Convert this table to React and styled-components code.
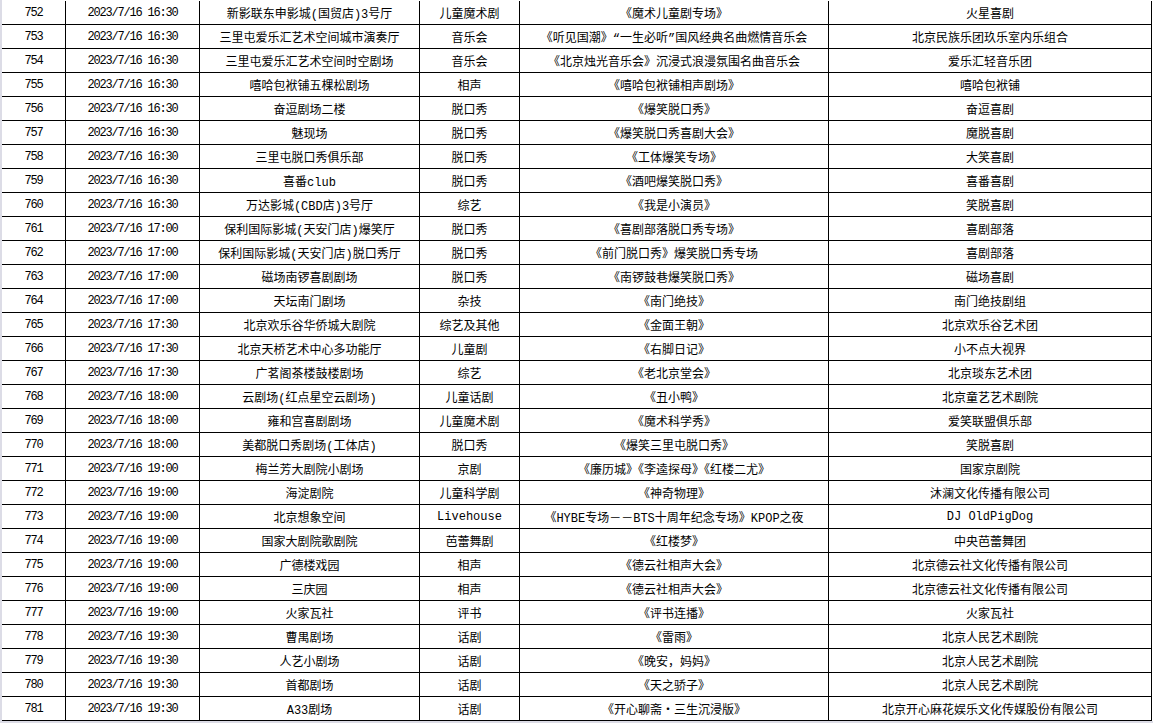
import React from 'react';
import styled, { createGlobalStyle } from 'styled-components';

const GlobalStyle = createGlobalStyle`
    html, body {
        margin: 0;
        padding: 0;
        background: #ffffff;
        overflow: hidden;
    }
`;

const Page = styled.div`
    display: flex;
    flex-direction: column;
    width: 1153px;
`;

const Sheet = styled.div`
    display: grid;
    grid-template-columns: 64px 134px 220px 100px 309px 323px;
    grid-auto-rows: 24px;
    border-left: 2px solid #dcdce6;
    padding-top: 1px;
`;

const Cell = styled.div`
    box-sizing: border-box;
    display: flex;
    align-items: center;
    justify-content: center;
    border-right: 1px solid #000;
    border-bottom: 1px solid #000;
    padding-top: 1px;
    font-family: ${({ $mono }) => ($mono ? '"Liberation Mono", monospace' : '"Liberation Mono", "Noto Sans CJK SC", sans-serif')};
    font-size: 12px;
    letter-spacing: ${({ $mono }) => ($mono ? '-1.2px' : '0')};
    color: #000;
    white-space: nowrap;
    overflow: hidden;
`;

const BottomStrip = styled.div`
    height: 3px;
    background: #dcdce6;
`;

const rows = [
    [752, '16:30', '新影联东申影城(国贸店)3号厅', '儿童魔术剧', '《魔术儿童剧专场》', '火星喜剧'],
    [753, '16:30', '三里屯爱乐汇艺术空间城市演奏厅', '音乐会', '《听见国潮》“一生必听”国风经典名曲燃情音乐会', '北京民族乐团玖乐室内乐组合'],
    [754, '16:30', '三里屯爱乐汇艺术空间时空剧场', '音乐会', '《北京烛光音乐会》沉浸式浪漫氛围名曲音乐会', '爱乐汇轻音乐团'],
    [755, '16:30', '嘻哈包袱铺五棵松剧场', '相声', '《嘻哈包袱铺相声剧场》', '嘻哈包袱铺'],
    [756, '16:30', '奋逗剧场二楼', '脱口秀', '《爆笑脱口秀》', '奋逗喜剧'],
    [757, '16:30', '魅现场', '脱口秀', '《爆笑脱口秀喜剧大会》', '魔脱喜剧'],
    [758, '16:30', '三里屯脱口秀俱乐部', '脱口秀', '《工体爆笑专场》', '大笑喜剧'],
    [759, '16:30', '喜番club', '脱口秀', '《酒吧爆笑脱口秀》', '喜番喜剧'],
    [760, '16:30', '万达影城(CBD店)3号厅', '综艺', '《我是小演员》', '笑脱喜剧'],
    [761, '17:00', '保利国际影城(天安门店)爆笑厅', '脱口秀', '《喜剧部落脱口秀专场》', '喜剧部落'],
    [762, '17:00', '保利国际影城(天安门店)脱口秀厅', '脱口秀', '《前门脱口秀》爆笑脱口秀专场', '喜剧部落'],
    [763, '17:00', '磁场南锣喜剧剧场', '脱口秀', '《南锣鼓巷爆笑脱口秀》', '磁场喜剧'],
    [764, '17:00', '天坛南门剧场', '杂技', '《南门绝技》', '南门绝技剧组'],
    [765, '17:30', '北京欢乐谷华侨城大剧院', '综艺及其他', '《金面王朝》', '北京欢乐谷艺术团'],
    [766, '17:30', '北京天桥艺术中心多功能厅', '儿童剧', '《右脚日记》', '小不点大视界'],
    [767, '17:30', '广茗阁茶楼鼓楼剧场', '综艺', '《老北京堂会》', '北京琰东艺术团'],
    [768, '18:00', '云剧场(红点星空云剧场)', '儿童话剧', '《丑小鸭》', '北京童艺艺术剧院'],
    [769, '18:00', '雍和宫喜剧剧场', '儿童魔术剧', '《魔术科学秀》', '爱笑联盟俱乐部'],
    [770, '18:00', '美都脱口秀剧场(工体店)', '脱口秀', '《爆笑三里屯脱口秀》', '笑脱喜剧'],
    [771, '19:00', '梅兰芳大剧院小剧场', '京剧', '《廉历城》《李逵探母》《红楼二尤》', '国家京剧院'],
    [772, '19:00', '海淀剧院', '儿童科学剧', '《神奇物理》', '沐澜文化传播有限公司'],
    [773, '19:00', '北京想象空间', 'Livehouse', '《HYBE专场－－BTS十周年纪念专场》KPOP之夜', 'DJ OldPigDog'],
    [774, '19:00', '国家大剧院歌剧院', '芭蕾舞剧', '《红楼梦》', '中央芭蕾舞团'],
    [775, '19:00', '广德楼戏园', '相声', '《德云社相声大会》', '北京德云社文化传播有限公司'],
    [776, '19:00', '三庆园', '相声', '《德云社相声大会》', '北京德云社文化传播有限公司'],
    [777, '19:00', '火家瓦社', '评书', '《评书连播》', '火家瓦社'],
    [778, '19:30', '曹禺剧场', '话剧', '《雷雨》', '北京人民艺术剧院'],
    [779, '19:30', '人艺小剧场', '话剧', '《晚安，妈妈》', '北京人民艺术剧院'],
    [780, '19:30', '首都剧场', '话剧', '《天之骄子》', '北京人民艺术剧院'],
    [781, '19:30', 'A33剧场', '话剧', '《开心聊斋・三生沉浸版》', '北京开心麻花娱乐文化传媒股份有限公司'],
];

const App = () => (
    <Page>
        <GlobalStyle />
        <Sheet>
            {rows.map(([no, time, venue, kind, title, troupe]) => (
                <React.Fragment key={no}>
                    <Cell $mono>{no}</Cell>
                    <Cell $mono>{`2023/7/16 ${time}`}</Cell>
                    <Cell>{venue}</Cell>
                    <Cell>{kind}</Cell>
                    <Cell>{title}</Cell>
                    <Cell>{troupe}</Cell>
                </React.Fragment>
            ))}
        </Sheet>
        <BottomStrip />
    </Page>
);

export default App;
